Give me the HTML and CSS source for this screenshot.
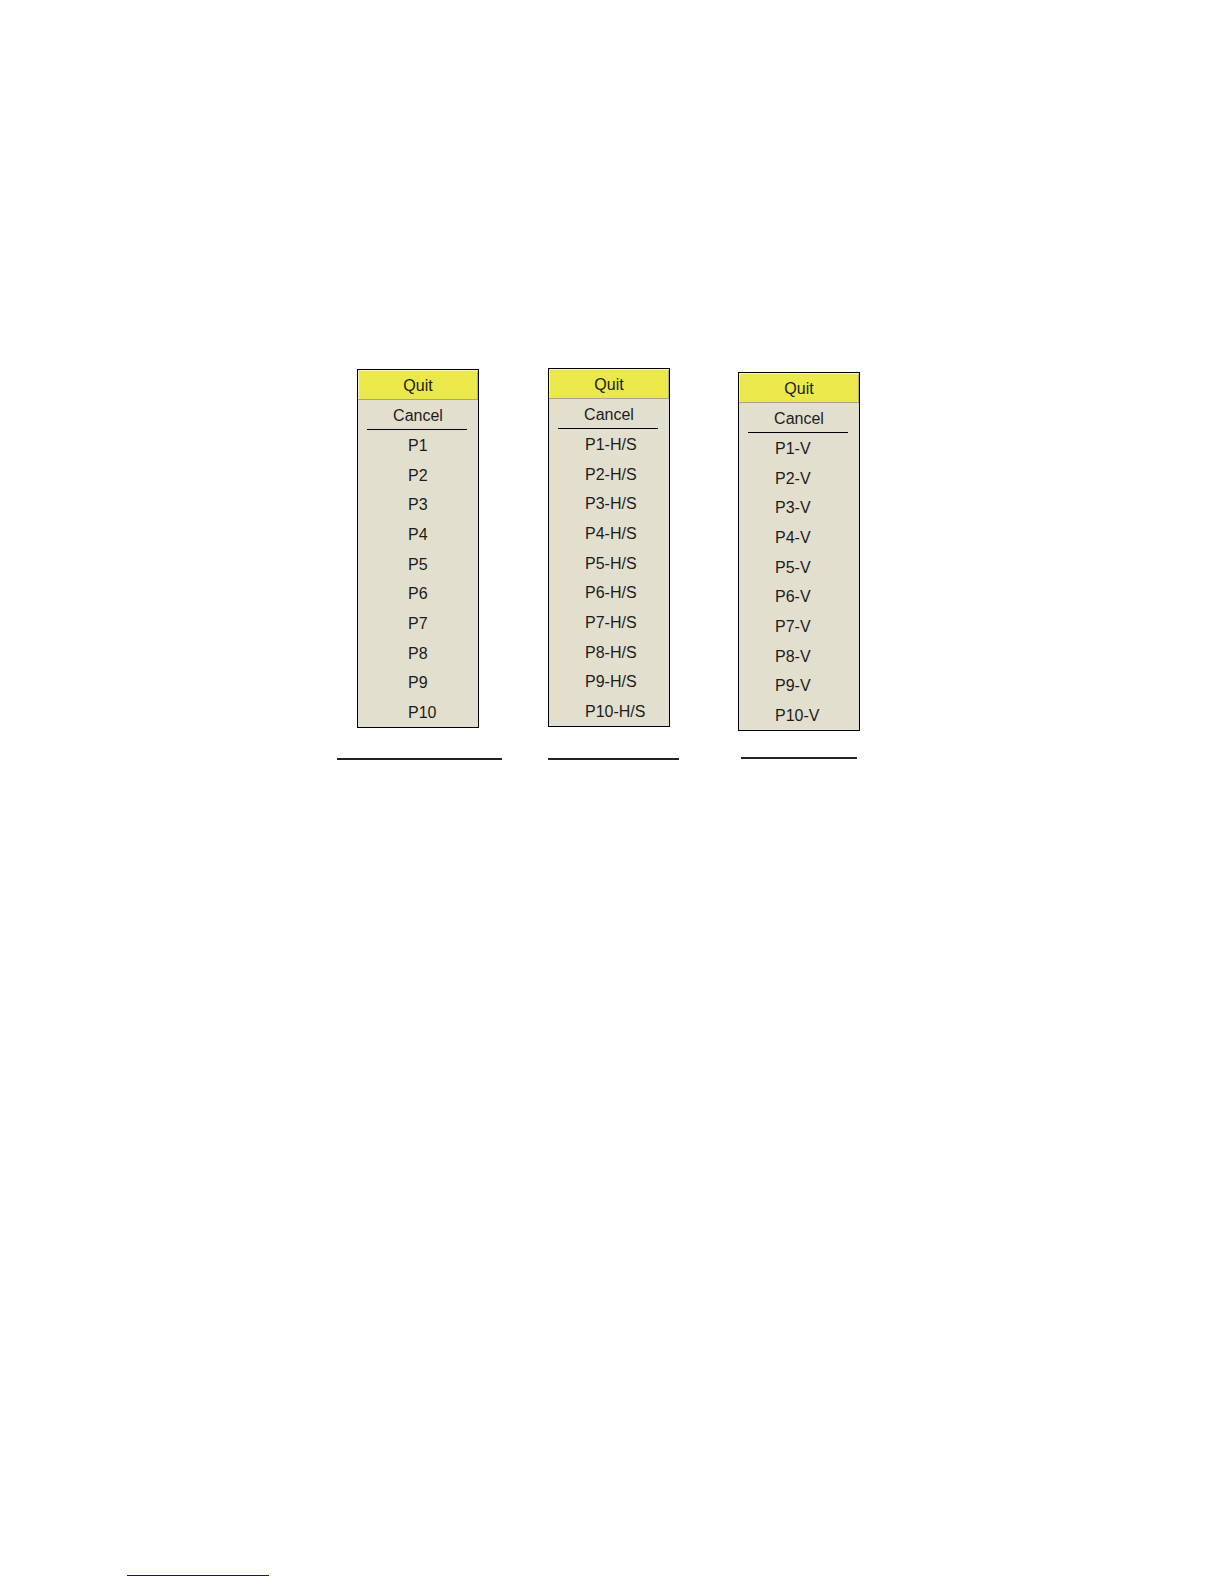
FILE: index.html
```html
<!DOCTYPE html>
<html lang="en">
<head>
<meta charset="utf-8">
<title>Program menus</title>
<link rel="stylesheet" href="styles.css">
</head>
<body>
<main class="menus">
  <section class="column column-p">
    <div class="menu">
      <button class="quit">Quit</button>
      <button class="cancel">Cancel</button>
      <hr class="divider">
      <div class="programs">
        <button>P1</button><button>P2</button><button>P3</button><button>P4</button><button>P5</button>
        <button>P6</button><button>P7</button><button>P8</button><button>P9</button><button>P10</button>
      </div>
    </div>
    <hr class="rule">
  </section>
  <section class="column column-hs">
    <div class="menu">
      <button class="quit">Quit</button>
      <button class="cancel">Cancel</button>
      <hr class="divider">
      <div class="programs">
        <button>P1-H/S</button><button>P2-H/S</button><button>P3-H/S</button><button>P4-H/S</button><button>P5-H/S</button>
        <button>P6-H/S</button><button>P7-H/S</button><button>P8-H/S</button><button>P9-H/S</button><button>P10-H/S</button>
      </div>
    </div>
    <hr class="rule">
  </section>
  <section class="column column-v">
    <div class="menu">
      <button class="quit">Quit</button>
      <button class="cancel">Cancel</button>
      <hr class="divider">
      <div class="programs">
        <button>P1-V</button><button>P2-V</button><button>P3-V</button><button>P4-V</button><button>P5-V</button>
        <button>P6-V</button><button>P7-V</button><button>P8-V</button><button>P9-V</button><button>P10-V</button>
      </div>
    </div>
    <hr class="rule">
  </section>
</main>
<footer class="footer"><hr class="footer-rule"></footer>
</body>
</html>
```
FILE: styles.css
```css
* { box-sizing: border-box; }
body {
  margin: 0;
  min-height: 100vh;
  display: flex;
  flex-direction: column;
  background: #fff;
  color: #1c1c1c;
  font: 16px/20px "Liberation Sans", Arial, sans-serif;
}
hr { margin: 0; border: 0; }
button {
  display: block;
  width: 100%;
  margin: 0;
  padding: 2px 0 0;
  border: 0;
  background: none;
  color: inherit;
  font: inherit;
}
.menus {
  display: flex;
  align-items: flex-start;
  padding: 368px 24px 0 337px;
}
.column {
  display: flex;
  flex-direction: column;
  align-items: center;
}
.column-p { width: 165px; padding-top: 1px; gap: 30px; align-items: flex-start; --indent: 50px; }
.column-p .menu { margin-left: 20px; }
.column-hs { width: 131px; margin-left: 46px; gap: 31px; align-items: flex-start; --indent: 36px; }
.column-v { width: 122px; margin-left: 59px; padding-top: 4px; gap: 26px; --indent: 36px; }
.menu {
  width: 122px;
  border: 1px solid #000;
  background: #e3dfce;
}
.quit {
  height: 30px;
  border-bottom: 1px solid #a9a28c;
  background: #ebe84c;
  box-shadow: inset 1px 1px #f6f3c4, inset -1px 0 #b5b07c;
}
.cancel { height: 29px; }
.divider { height: 1px; margin: 0 11px 0 9px; background: #000; }
.programs {
  display: grid;
  grid-template-rows: repeat(10, 1fr);
  height: 297px;
}
.programs button { padding-left: var(--indent); text-align: left; }
.rule { width: 100%; height: 2px; background: #222226; }
.column-v .rule { width: 116px; }
.footer { margin-top: auto; padding: 0 0 8px 127px; }
.footer-rule { width: 142px; height: 1px; background: #14146e; }
```
